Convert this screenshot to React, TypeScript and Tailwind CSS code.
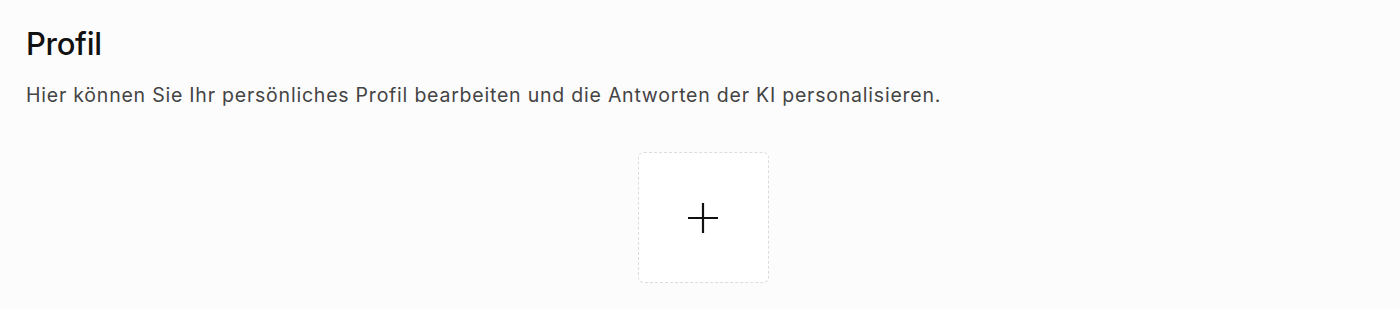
export default function App() {
	return (
		<div className="min-h-[309px] w-full bg-[#fcfcfc] pl-[26px] pr-[20px] pt-[24px]" style={{ fontFamily: 'Inter, "Noto Sans", sans-serif' }}>
			<h1 className="text-[31px] font-medium leading-[40px] text-[#111] tracking-[-0.3px]">Profil</h1>
			<p className="mt-[17px] text-[19.5px] leading-[28px] tracking-[0.78px] text-[#444]">
				Hier können Sie Ihr persönliches Profil bearbeiten und die Antworten der KI personalisieren.
			</p>
			<div className="mt-[43px] flex justify-center">
				<button className="flex h-[131px] w-[131px] items-center justify-center rounded-[6px] border border-dashed border-[#dcdcdc] bg-white">
					<svg width="32" height="32" viewBox="0 0 32 32" fill="none" stroke="#111" strokeWidth="2.2">
						<path d="M16 1v30M1 16h30" />
					</svg>
				</button>
			</div>
		</div>
	);
}
